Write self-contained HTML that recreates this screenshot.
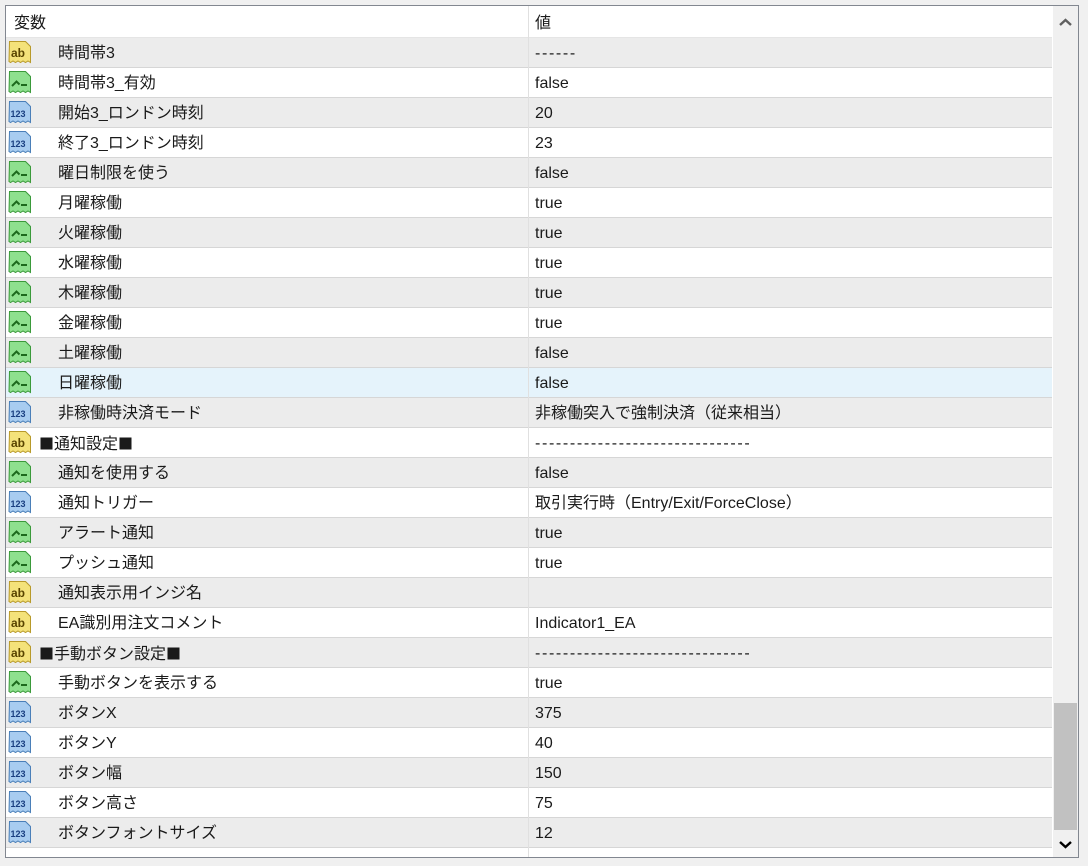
<!DOCTYPE html>
<html><head><meta charset="utf-8"><style>
*{margin:0;padding:0;box-sizing:border-box}
body{width:1088px;height:866px;background:#f0f0f0;position:relative;overflow:hidden;font-family:"Liberation Sans","Noto Sans CJK JP",sans-serif;font-size:16px;color:#1a1a1a}
#box{position:absolute;left:5px;top:5px;width:1074px;height:853px;border:1px solid #828790;background:#fff;overflow:hidden}
#hdr{position:absolute;left:0;top:0;width:1046px;height:32px;background:#fff;border-bottom:1px solid #e5e5e5;line-height:32px}
#hdr span{position:absolute;top:2px}
.row{position:absolute;left:0;width:1046px;height:30px;border-bottom:1px solid #d6d6d6;line-height:29px}
.g{background:#ececec}.w{background:#fff}.s{background:#e5f3fb}
.row .n{position:absolute;left:52px;top:1px;white-space:nowrap}
.row .n.b{left:33px}
.row .v{position:absolute;left:529px;top:1px;white-space:nowrap}
.dash{letter-spacing:1.65px}
.sq{font-family:"Noto Sans CJK JP",sans-serif;font-size:15px}
.row svg{position:absolute;left:1px;top:2px}
.div{position:absolute;left:522px;top:0;width:1px;height:853px;background:#e0e0e0}
#sb{position:absolute;left:1047px;top:0;width:25px;height:851px;background:#f0f0f0}
#th{position:absolute;left:1px;top:697px;width:23px;height:127px;background:#c1c1c1}
#bot{position:absolute;left:0;top:858px;width:1088px;height:8px;background:#f0f0f0}
</style></head><body>
<svg width="0" height="0" style="position:absolute">
<defs>
<path id="pg" d="M2.5 1.5h16l5 5v16l-2.5-1.5-2.5 1.5-2.5-1.5-2.5 1.5-2.5-1.5-2.5 1.5-2.5-1.5-2.5 1.5-1.5-1z"/>
</defs></svg>
<div id="box">
<div id="hdr"><span style="left:8px">変数</span><span style="left:529px">値</span></div>
<div id="rows"></div>
<div class="div"></div>
<div id="sb">
<svg width="25" height="25" style="position:absolute;top:4px;left:0"><path d="M7 15l5.5-5 5.5 5" fill="none" stroke="#606060" stroke-width="2.4"/></svg>
<div id="th"></div>
<svg width="25" height="25" style="position:absolute;top:826px;left:0"><path d="M7 10l5.5 5 5.5-5" fill="none" stroke="#000" stroke-width="2.4"/></svg>
</div>
</div>
<div id="bot"></div>
<script>
var d=[["a","時間帯3","------"],["b","時間帯3_有効","false"],["n","開始3_ロンドン時刻","20"],["n","終了3_ロンドン時刻","23"],["b","曜日制限を使う","false"],["b","月曜稼働","true"],["b","火曜稼働","true"],["b","水曜稼働","true"],["b","木曜稼働","true"],["b","金曜稼働","true"],["b","土曜稼働","false"],["b","日曜稼働","false"],["n","非稼働時決済モード","非稼働突入で強制決済（従来相当）"],["a","<span class=sq>■</span>通知設定<span class=sq>■</span>","<span class=dash>-------------------------------</span>",1],["b","通知を使用する","false"],["n","通知トリガー","取引実行時（Entry/Exit/ForceClose）"],["b","アラート通知","true"],["b","プッシュ通知","true"],["a","通知表示用インジ名",""],["a","EA識別用注文コメント","Indicator1_EA"],["a","<span class=sq>■</span>手動ボタン設定<span class=sq>■</span>","<span class=dash>-------------------------------</span>",1],["b","手動ボタンを表示する","true"],["n","ボタンX","375"],["n","ボタンY","40"],["n","ボタン幅","150"],["n","ボタン高さ","75"],["n","ボタンフォントサイズ","12"]];
var ic={a:['#f4e27a','#b89a2a','<text x="4" y="17" font-size="12" font-weight="bold" fill="#5a4500" font-family="Liberation Sans">ab</text>'],
b:['#8ee08e','#3a9a3a','<path d="M5 16l4.5-4.5 3 3M14 15h6" stroke="#1d6a1d" stroke-width="2" fill="none"/>'],
n:['#a8ccf0','#4a7fb8','<text x="3.5" y="17" font-size="9" font-weight="bold" fill="#1a3f80" font-family="Liberation Sans">123</text>']};
var h='';
d.forEach(function(r,i){var y=32+i*30;var c=i==11?'s':(i%2==0?'g':'w');var k=ic[r[0]];
var v=r[2]=='------'?'<span class=dash>------</span>':r[2];
h+='<div class="row '+c+'" style="top:'+y+'px"><svg width="26" height="26"><use href="#pg" fill="'+k[0]+'" stroke="'+k[1]+'"/>'+k[2]+'</svg><span class="n'+(r[3]?' b':'')+'">'+r[1]+'</span><span class="v">'+v+'</span></div>';});
document.getElementById('rows').innerHTML=h;
</script>
</body></html>
